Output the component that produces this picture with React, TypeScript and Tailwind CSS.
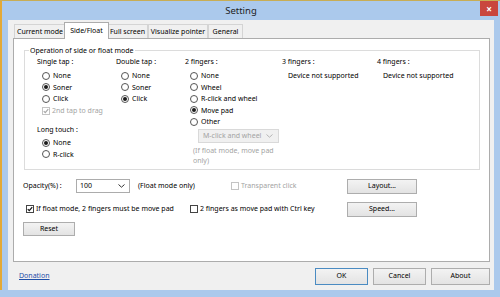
import React from 'react';

const Chevron = ({ gray }: { gray?: boolean }) => (
  <svg viewBox="0 0 7 4" className="h-[4px] w-[7px]">
    <path d="M0.5 0.5L3.5 3.2L6.5 0.5" fill="none" stroke={gray ? '#b5b5b5' : '#333'} strokeWidth="1" />
  </svg>
);

const Radio = ({ label, checked }: { label: string; checked?: boolean }) => (
  <div className="flex h-[11.5px] items-center">
    <span className="mr-[3px] flex h-[8px] w-[8px] items-center justify-center rounded-full border border-[#555] bg-white">
      {checked && <span className="h-[4px] w-[4px] rounded-full bg-[#1b1b1b]" />}
    </span>
    <span>{label}</span>
  </div>
);

const Check = ({
  label,
  checked,
  disabled,
  className
}: {
  label: string;
  checked?: boolean;
  disabled?: boolean;
  className?: string;
}) => (
  <div className={`flex items-center ${disabled ? 'text-[#a3a3a3]' : 'text-black'} ${className ?? ''}`}>
    <span
      className={`mr-[2px] flex h-[8px] w-[8px] items-center justify-center border bg-white ${
        disabled ? 'border-[#c4c4c4]' : 'border-[#444]'
      }`}
    >
      {checked && (
        <svg viewBox="0 0 8 8" className="h-[6px] w-[6px]">
          <path
            d="M1 4.2L3 6.2L7 1.4"
            fill="none"
            stroke={disabled ? '#a8a8a8' : '#111'}
            strokeWidth="1.6"
          />
        </svg>
      )}
    </span>
    <span>{label}</span>
  </div>
);

const Button = ({ label, className, focus }: { label: string; className?: string; focus?: boolean }) => (
  <button
    className={`flex items-center justify-center border bg-gradient-to-b from-[#f3f3f3] to-[#e3e3e3] ${
      focus ? 'border-[#4a8bc2]' : 'border-[#adadad]'
    } ${className ?? ''}`}
  >
    {label}
  </button>
);

const tabs = [
  { label: 'Current mode', w: 'w-[52px]' },
  { label: 'Side/Float', w: 'w-[41px]', active: true },
  { label: 'Full screen', w: 'w-[41px]' },
  { label: 'Visualize pointer', w: 'w-[60px]' },
  { label: 'General', w: 'w-[35px]' }
];

export default function App() {
  return (
    <div className="flex h-[297px] w-[500px] flex-col overflow-hidden whitespace-nowrap border-t border-[#c8ad55] bg-[#abc9ec] font-['Noto_Sans',sans-serif] text-[7px] leading-[11.5px] text-black">
      {/* title bar */}
      <div className="flex h-[19px] items-start">
        <div className="h-full w-[2px] bg-[#e4a936]" />
        <div className="flex flex-1 items-center justify-center pt-[3px] text-[9.5px] leading-[13px] text-[#1e1e1e]">
          Setting
        </div>
        <div className="mr-[2px] flex h-[15px] w-[18px] items-center justify-center bg-[#c9463d] text-[10px] font-bold leading-none text-white">
          ×
        </div>
      </div>

      <div className="flex flex-1">
        <div className="w-[2px] bg-[#e4a936]" />
        <div className="w-[6px]" />

        {/* client area */}
        <div className="flex w-[486px] flex-col bg-[#f0f0f0]">
          {/* tabs */}
          <div className="flex h-[18px] items-end pl-[6px] pt-[2px]">
            {tabs.map((t) =>
              t.active ? (
                <div
                  key={t.label}
                  className="relative z-10 -mx-[2px] -mb-[1px] flex h-[17px] w-[45px] items-center justify-center border border-b-0 border-[#acacac] bg-white"
                >
                  {t.label}
                </div>
              ) : (
                <div
                  key={t.label}
                  className={`flex h-[14px] items-center justify-center border border-b-0 border-[#d4d4d4] bg-[#f0f0f0] ${t.w}`}
                >
                  {t.label}
                </div>
              )
            )}
          </div>

          {/* panel */}
          <div className="ml-[5px] flex h-[224px] w-[477px] flex-col border border-[#acacac] bg-white pl-[9px] pt-[6px]">
            <fieldset className="ml-[1px] w-[456px] border border-[#dcdcdc]">
              <legend className="ml-[4px] px-[1px] leading-[11px]">Operation of side or float mode</legend>
              <div className="flex pb-[3px] pl-[12px]">
                <div className="w-[79px]">
                  <div className="mb-[2.5px]">Single tap :</div>
                  <div className="pl-[5px]">
                    <Radio label="None" />
                    <Radio label="Soner" checked />
                    <Radio label="Click" />
                    <Check label="2nd tap to drag" checked disabled className="h-[13px]" />
                  </div>
                  <div className="mb-[1.5px] mt-[6.5px]">Long touch :</div>
                  <div className="pl-[5px]">
                    <Radio label="None" checked />
                    <Radio label="R-click" />
                  </div>
                </div>
                <div className="w-[69px]">
                  <div className="mb-[2.5px]">Double tap :</div>
                  <div className="pl-[5px]">
                    <Radio label="None" />
                    <Radio label="Soner" />
                    <Radio label="Click" checked />
                  </div>
                </div>
                <div className="w-[97px]">
                  <div className="mb-[2.5px]">2 fingers :</div>
                  <div className="pl-[5px]">
                    <Radio label="None" />
                    <Radio label="Wheel" />
                    <Radio label="R-click and wheel" />
                    <Radio label="Move pad" checked />
                    <Radio label="Other" />
                  </div>
                  <div className="ml-[13px] mt-[1px] flex h-[14px] w-[81px] items-center justify-between border border-[#d9d9d9] bg-[#f0f0f0] pl-[4px] pr-[5px] text-[#a3a3a3]">
                    M-click and wheel
                    <Chevron gray />
                  </div>
                  <div className="ml-[8px] mt-[3px] w-[86px] whitespace-normal leading-[10px] text-[#a3a3a3]">
                    (If float mode, move pad only)
                  </div>
                </div>
                <div className="w-[95px]">
                  <div className="mb-[2.5px]">3 fingers :</div>
                  <div className="pl-[6px]">Device not supported</div>
                </div>
                <div className="flex-1">
                  <div className="mb-[2.5px]">4 fingers :</div>
                  <div className="pl-[6px]">Device not supported</div>
                </div>
              </div>
            </fieldset>

            <div className="mt-[9px] flex h-[15px] items-center">
              <span className="w-[53px]">Opacity(%) :</span>
              <div className="flex h-[14px] w-[54px] items-center justify-between border border-[#acacac] bg-white pl-[3px] pr-[4px]">
                100
                <Chevron />
              </div>
              <span className="ml-[8px] w-[93px]">(Float mode only)</span>
              <Check label="Transparent click" disabled className="w-[116px]" />
              <Button label="Layout..." className="h-[15px] w-[70px]" />
            </div>

            <div className="mt-[8px] flex h-[15px] items-center">
              <Check label="If float mode, 2 fingers must be move pad" checked className="ml-[3px] w-[164px]" />
              <Check label="2 fingers as move pad with Ctrl key" className="w-[157px]" />
              <Button label="Speed..." className="h-[15px] w-[70px]" />
            </div>

            <div className="mt-[5px] flex">
              <Button label="Reset" className="h-[14px] w-[52px]" />
            </div>
          </div>

          {/* footer */}
          <div className="flex flex-1 items-center pl-[11px] pr-[4px]">
            <a className="text-[#1f4fa8] underline">Donation</a>
            <div className="ml-auto flex gap-[5px]">
              <Button label="OK" focus className="h-[17px] w-[53px]" />
              <Button label="Cancel" className="h-[17px] w-[53px]" />
              <Button label="About" className="h-[17px] w-[59px]" />
            </div>
          </div>
        </div>

        <div className="flex-1" />
      </div>
      <div className="h-[7px]" />
    </div>
  );
}
